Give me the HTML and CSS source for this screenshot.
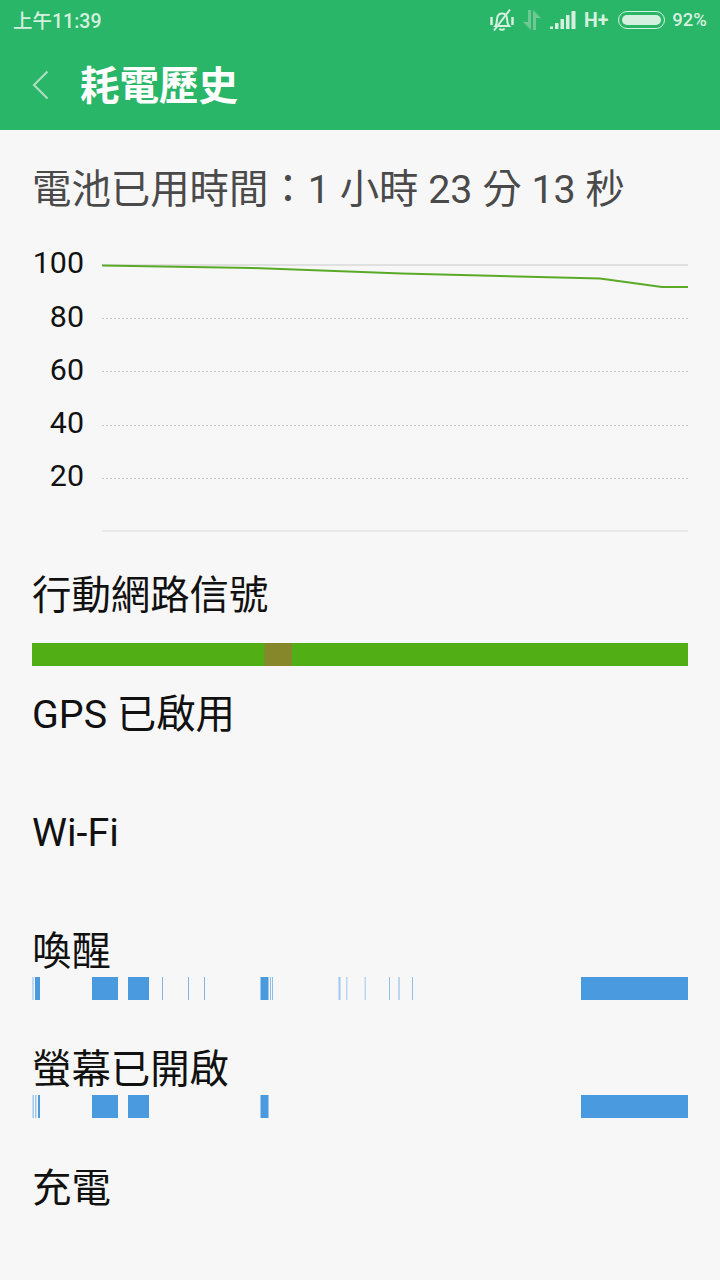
FILE: index.html
```html
<!DOCTYPE html>
<html lang="zh-Hant">
<head>
    <meta charset="UTF-8">
    <meta name="viewport" content="width=device-width, initial-scale=1.0">
    <title>耗電歷史</title>
    <link rel="stylesheet" href="styles.css">
</head>
<body>
    <header class="app-header">
        <div class="status-bar">
            <span class="status-time">上午11:39</span>
            <div class="status-icons">
                <svg class="icon-bell" width="24" height="24" viewBox="0 0 24 24" fill="none" stroke="#d6f0df" stroke-width="2">
                    <path d="M5.500 18c1.500-1.500 1.200-5 1.600-7.500C7.500 7.500 9.500 5.500 12 5.500c2.800 0 4.700 2 5 4.800.3 3 .2 6 2 7.700z"/>
                    <path d="M9.500 20.500c1 1.800 4 1.800 5 0"/>
                    <path d="M4 22.500 20 1.500"/>
                    <path d="M1.500 9v8M22.500 9v8" stroke-width="2.500"/>
                </svg>
                <svg class="icon-arrows" width="18" height="20" viewBox="0 0 18 20" fill="#6fc992">
                    <path d="M5 0h3v20L0 12h5z"/>
                    <path d="M10 0l8 8h-5v12h-3z"/>
                </svg>
                <svg class="icon-signal" width="26" height="18" viewBox="0 0 26 18" fill="#d6f0df">
                    <rect x="0" y="15.500" width="3" height="2.500"/>
                    <rect x="5" y="12" width="3.500" height="6"/>
                    <rect x="10.500" y="8" width="3.500" height="10"/>
                    <rect x="16" y="4" width="3.500" height="14"/>
                    <rect x="21.500" y="0" width="4" height="18"/>
                </svg>
                <span class="status-net">H+</span>
                <div class="battery"><div class="battery-level"></div></div>
                <span class="status-percent">92%</span>
            </div>
        </div>
        <div class="toolbar">
            <svg class="back-icon" width="18" height="30" viewBox="0 0 18 30" fill="none" stroke="#a9dfbd" stroke-width="2.200">
                <path d="M15.500 2.500 2 16l13.500 13.500"/>
            </svg>
            <h1 class="toolbar-title">耗電歷史</h1>
        </div>
    </header>

    <main class="content">
        <h2 class="usage-time">電池已用時間：1 小時 23 分 13 秒</h2>

        <div class="chart">
            <div class="chart-labels">
                <span>100</span>
                <span>80</span>
                <span>60</span>
                <span>40</span>
                <span>20</span>
            </div>
            <svg class="chart-plot" width="586" height="278" viewBox="0 0 586 278" fill="none">
                <line class="grid-top" x1="0" y1="3" x2="586" y2="3"/>
                <line class="grid-dot" x1="0" y1="56.500" x2="586" y2="56.500"/>
                <line class="grid-dot" x1="0" y1="109.500" x2="586" y2="109.500"/>
                <line class="grid-dot" x1="0" y1="163.500" x2="586" y2="163.500"/>
                <line class="grid-dot" x1="0" y1="216.500" x2="586" y2="216.500"/>
                <line class="grid-bottom" x1="0" y1="269" x2="586" y2="269"/>
                <path class="battery-line" d="M0 3.500 150 6 300 11.500 498 16.500 560 25 586 25"/>
            </svg>
        </div>

        <section class="track track-signal">
            <div class="track-title">行動網路信號</div>
            <svg class="track-bar" width="656" height="23" viewBox="0 0 656 23">
                <rect x="0" width="656" height="23" fill="#52ae15"/>
                <rect x="232.500" width="27.500" height="23" fill="#86862a"/>
            </svg>
        </section>

        <section class="track">
            <div class="track-title">GPS 已啟用</div>
            <div class="track-bar"></div>
        </section>

        <section class="track">
            <div class="track-title">Wi-Fi</div>
            <div class="track-bar"></div>
        </section>

        <section class="track">
            <div class="track-title">喚醒</div>
            <svg class="track-bar" width="656" height="23" viewBox="0 0 656 23" fill="#4a9ae0">
                <rect x="0.500" width="1" height="23" opacity="0.6"/>
                <rect x="3" width="5" height="23"/>
                <rect x="60" width="26" height="23"/>
                <rect x="96" width="21" height="23"/>
                <rect x="130" width="1" height="23" opacity="0.7"/>
                <rect x="156" width="1" height="23" opacity="0.7"/>
                <rect x="172" width="1" height="23" opacity="0.7"/>
                <rect x="228.500" width="8" height="23"/>
                <rect x="238" width="1" height="23" opacity="0.6"/>
                <rect x="240" width="1" height="23" opacity="0.6"/>
                <rect x="306.500" width="2" height="23" opacity="0.5"/>
                <rect x="314" width="1.500" height="23" opacity="0.35"/>
                <rect x="332.500" width="1.500" height="23" opacity="0.35"/>
                <rect x="357" width="1" height="23" opacity="0.6"/>
                <rect x="366" width="2" height="23" opacity="0.35"/>
                <rect x="380" width="1" height="23" opacity="0.6"/>
                <rect x="549" width="107" height="23"/>
            </svg>
        </section>

        <section class="track">
            <div class="track-title">螢幕已開啟</div>
            <svg class="track-bar" width="656" height="23" viewBox="0 0 656 23" fill="#4a9ae0">
                <rect x="0.500" width="1.500" height="23" opacity="0.5"/>
                <rect x="3" width="1.500" height="23" opacity="0.5"/>
                <rect x="6" width="2" height="23"/>
                <rect x="60" width="26" height="23"/>
                <rect x="96" width="21" height="23"/>
                <rect x="228.500" width="8" height="23"/>
                <rect x="549" width="107" height="23"/>
            </svg>
        </section>

        <section class="track">
            <div class="track-title">充電</div>
            <div class="track-bar"></div>
        </section>
    </main>
</body>
</html>
```

FILE: styles.css
```css
* {
    box-sizing: border-box;
}

html,
body {
    margin: 0;
    height: 1280px;
    overflow: hidden;
}

body {
    font-family: Roboto, "Noto Sans CJK TC", sans-serif;
    background-color: #f7f7f7;
    color: #111;
}

.app-header {
    background-color: #29b668;
    height: 130px;
}

.status-bar {
    display: flex;
    justify-content: space-between;
    align-items: center;
    height: 40px;
    padding: 0 13px;
    color: #d6f0df;
    font-size: 18.500px;
    font-weight: 500;
}

.status-time {
    margin-bottom: 2px;
    font-size: 19.500px;
}

.status-icons {
    display: flex;
    align-items: center;
}

.icon-bell {
    margin-right: 9px;
}

.icon-arrows {
    margin-right: 9px;
}

.icon-signal {
    margin-right: 8px;
}

.status-net {
    margin-right: 10px;
    font-size: 19.500px;
    font-weight: 700;
}

.battery {
    width: 47px;
    height: 18px;
    margin-right: 7px;
    padding: 3px;
    border: 1.500px solid #d6f0df;
    border-radius: 9px;
}

.battery-level {
    height: 100%;
    border-radius: 6px;
    background-color: #d6f0df;
}

.toolbar {
    display: flex;
    align-items: center;
    height: 90px;
    padding: 0 0 2px 32px;
}

.back-icon {
    margin-right: 30px;
}

.toolbar-title {
    margin: 0 0 4px;
    color: #fff;
    font-size: 39.500px;
    font-weight: 700;
}

.content {
    padding: 0 32px;
}

.usage-time {
    height: 132px;
    margin: 0;
    padding-top: 31px;
    color: #4a4a4a;
    font-size: 39.400px;
    font-weight: 400;
    line-height: 58px;
}

.chart {
    display: flex;
    height: 278px;
    margin-bottom: 27px;
}

.chart-labels {
    display: flex;
    flex-direction: column;
    width: 70px;
    margin-top: -25.600px;
    padding-right: 18px;
    font-size: 30.400px;
    text-align: right;
}

.chart-labels span {
    height: 53.200px;
    line-height: 53.200px;
}

.grid-top {
    stroke: #d8d8d8;
    stroke-width: 1.500;
}

.grid-dot {
    stroke: #c4c4c4;
    stroke-width: 1;
    stroke-dasharray: 2 2;
}

.grid-bottom {
    stroke: #e9e9e9;
    stroke-width: 2;
}

.battery-line {
    stroke: #5aaa28;
    stroke-width: 2;
    fill: none;
}

.track {
    height: 118.600px;
}

.track-title {
    height: 54px;
    font-size: 39.400px;
    line-height: 58px;
}

.track-bar {
    display: block;
    height: 23px;
}

.track-signal .track-bar {
    margin-top: 22px;
}
```
